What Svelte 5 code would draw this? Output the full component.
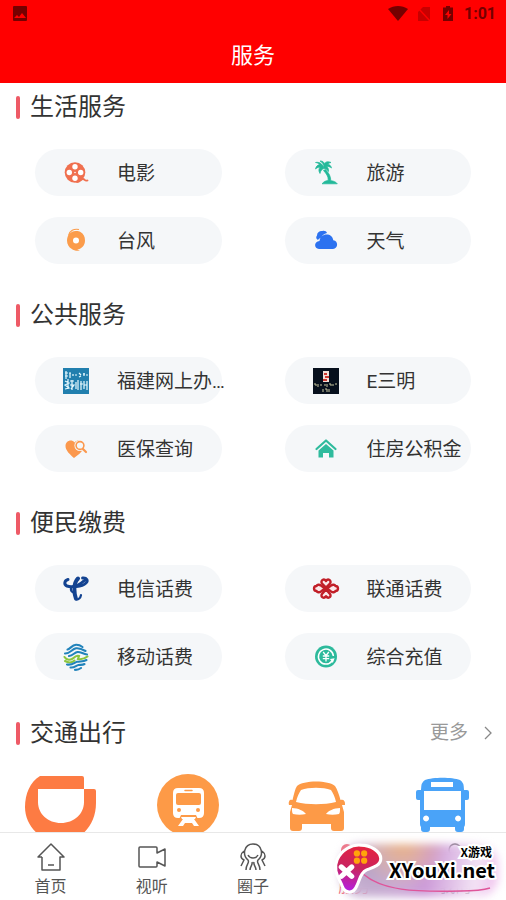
<script lang="ts">
  const sections = [
    {
      title: '生活服务',
      items: [
        { label: '电影', icon: 'film' },
        { label: '旅游', icon: 'palm' },
        { label: '台风', icon: 'typhoon' },
        { label: '天气', icon: 'cloud' }
      ]
    },
    {
      title: '公共服务',
      items: [
        { label: '福建网上办…', icon: 'fujian' },
        { label: 'E三明', icon: 'sanming' },
        { label: '医保查询', icon: 'health' },
        { label: '住房公积金', icon: 'house' }
      ]
    },
    {
      title: '便民缴费',
      items: [
        { label: '电信话费', icon: 'telecom' },
        { label: '联通话费', icon: 'unicom' },
        { label: '移动话费', icon: 'mobile' },
        { label: '综合充值', icon: 'recharge' }
      ]
    }
  ];

  const travel = ['ride', 'train', 'car', 'bus'];

  const tabs = [
    { label: '首页', icon: 'home' },
    { label: '视听', icon: 'video' },
    { label: '圈子', icon: 'circle' },
    { label: '服务', icon: 'service' },
    { label: '我的', icon: 'mine' }
  ];

  let activeTab = $state('服务');
</script>

{#snippet serviceIcon(name: string)}
  <svg class="icon" viewBox="0 0 28 28" aria-hidden="true">
    {#if name === 'film'}
      <circle cx="13" cy="13.500" r="10.300" fill="#f0704f" />
      <path d="M15 23c3 0 4-3 6-3 2 0 1.500 2.500 4.500 1.500" fill="none" stroke="#f0704f" stroke-width="1.800" stroke-linecap="round" />
      <g fill="#fff">
        <circle cx="13" cy="7.800" r="2.700" />
        <circle cx="13" cy="19.200" r="2.700" />
        <circle cx="7.300" cy="13.500" r="2.700" />
        <circle cx="18.700" cy="13.500" r="2.700" />
        <circle cx="13" cy="13.500" r="0.800" />
      </g>
    {:else if name === 'palm'}
      <g fill="#23b99a" stroke="#23b99a" stroke-width="0.700" stroke-linejoin="round">
        <path d="M10 24.800c2-2.300 4-3.200 6.200-3.300.3-4-2-7-4.700-10l2-1c3.500 3.500 5.300 7 5.300 11.200 3 .2 5 1.200 6.500 3.100z" />
        <path d="M12 8.500C10 4.500 7 2.600 3.500 3.500c2 .3 3.500 1 4 2C5.500 6 4 7.500 3.500 10c1.800-1.500 3.200-2 4.500-1.800C6.500 10 6.500 12 8 14.500c.5-2.500 1.500-4 4-5 1.500 0 3 1 4.500 3 .3-2.500-.5-4-2-5 2-.2 3.500.3 5 1.500-.5-2.300-2-3.500-4-3.700.8-1 2-1.500 3.500-1.800C15.500 1.800 13 3 12.500 5 12 3 10.500 1.800 8 2c2.500 1.500 4 3.500 4 6.500z" />
      </g>
    {:else if name === 'typhoon'}
      <path d="M14.500 4C9 3.500 5 8 5 13.500c0 4 2 6.800 4.500 8.200 2.500 2 5.500 2.300 8.500 1.800-1.500-.2-2.300-.6-2.700-1C20 22 23 18 23 13.500c0-4-1.500-6.500-4.500-8.500-1.300-.8-2.600-1-4-1z" fill="#fb9c4b" />
      <path d="M17 2.500c-5-1-9.500 1-10.500 6" fill="none" stroke="#fb9c4b" stroke-width="1.200" />
      <circle cx="14" cy="13.500" r="3" fill="#fff" />
    {:else if name === 'cloud'}
      <path d="M6 13c-2-1-2.300-3-1-4.500C5 5 8 3.500 10.500 4c2-.5 4 .5 4.500 2-3 .5-5 2.500-5.500 4.500C8 11 7 11.500 6 13z" fill="#2c72f0" />
      <path d="M7 22c-5-.3-5.500-7.500.5-8C8 10 11 7.500 14.500 7.500c3.500 0 6.300 2 6.800 5.800 5.300.7 5 8.200-.3 8.700z" fill="#2c72f0" />
    {:else if name === 'fujian'}
      <path d="M1 1h26v26H1z" fill="#217fae" />
      <path d="M3 6h3M4 4v8M3 9h3M8 6v5M7 6h2M11 7v2M13 8h2M17 6l2 2M17 10l2-1M21 7h2M22 6v3M24 8h2M3 14l4 2-4 2 4 3-4 1M6 12v10M8 14h4M10 13v10M8 18h4l-3 4M14 15v7M16 13v10M19 14v9M18 17h3M22 14v8M25 14v9M22 18h3" fill="none" stroke="#e8fbff" stroke-width="1.200" />
    {:else if name === 'sanming'}
      <path d="M1 1h26v26H1z" fill="#07101d" />
      <path d="M11 4h6v11h-6z" fill="#f1e0d8" />
      <path d="M12 6h3v2h-3zM13 9h4v2h-4zM11 12h4v2h-4z" fill="#cf3931" />
      <path d="M2 17h2v2M6 17v3M8 18h2M13 17v2M15 17v3M17 17h2v2M21 17v2M23 17h2M11 22v3M13 22h2v3M17 22v3" fill="none" stroke="#c8c6a0" stroke-width="1" />
    {:else if name === 'health'}
      <path d="M12 23C8 19.500 3.500 15.500 3.500 11c0-5 6-7.500 9-3.500 2-2.500 5-2.500 7-1l2 7c-2 4-5.500 6.500-9.500 9.500z" fill="#fb984d" />
      <circle cx="18" cy="10.500" r="5.600" fill="#f5f7f9" />
      <circle cx="18" cy="10.500" r="3.900" fill="#f5f7f9" stroke="#fb984d" stroke-width="1.600" />
      <path d="m21 14 3 3" stroke="#fb984d" stroke-width="2.200" stroke-linecap="round" />
    {:else if name === 'house'}
      <path d="m4.500 14 9.500-8.500 9.500 8.500" fill="none" stroke="#2fbb9d" stroke-width="2.200" stroke-linecap="round" stroke-linejoin="round" />
      <path d="M6.500 15.500 14 9l7.500 6.500v7H17V18h-6v4.500H6.500z" fill="#2fbb9d" />
    {:else if name === 'telecom'}
      <g fill="none" stroke="#134391" stroke-linecap="round">
        <path d="M6 4.500C2.500 5.500 1.500 9.500 5 11c5 1.800 12-.5 18-6" stroke-width="3" />
        <path d="M20.500 3c4.500-.5 6 2.500 3.500 5-2 2-5.500 3.200-9.500 3.500" stroke-width="2.800" />
        <path d="M16 3.500c-3 3-3.800 6.500-3.600 11 .1 4 .4 6.500 1.500 9" stroke-width="4" />
        <path d="M9 12.500c-.5 3 .5 4.500 3 5.500M14 24.500c2.500.5 4.500-1.500 5-4.500" stroke-width="2.200" />
      </g>
    {:else if name === 'unicom'}
      <g fill="#fbe9ea" stroke="#c11f28" stroke-width="2.400" stroke-linejoin="round">
        <path d="M14 12.500 10 8.500C8 5.500 12 3 14 6 16 3 20 5.500 18 8.500z" />
        <path d="m14 14.500-4 4.500c-2 3 2 5 4 2.300 2 2.700 6 .7 4-2.300z" />
        <path d="m13 13.500-4-3c-2-1.300-4-.8-4.500.5-3.300.2-3.300 4.800 0 5 .5 1.300 2.500 1.800 4.500.5z" />
        <path d="m15 13.500 4-3c2-1.300 4-.8 4.500.5 3.300.2 3.300 4.800 0 5-.5 1.300-2.500 1.800-4.500.5z" />
      </g>
    {:else if name === 'mobile'}
      <g fill="none" stroke-width="2.100" stroke-linecap="round">
        <path d="M5.500 6.500C8 6 10 2 14 1.800c2.500-.1 4.500.7 6.500 2.200" stroke="#2183bb" />
        <path d="M3 10.500c5 .3 7-4.500 11-5.200 3.500-.5 6 .7 9.500 2.700" stroke="#2183bb" />
        <path d="M7 13c4-.5 5.500-3.500 8.500-4 3-.4 5.500 2 9.500 2.500" stroke="#2183bb" />
        <path d="M2.500 14c2 3.500 6.500 3.500 9 1 1.500-1.500 3.500-3 5.500-2l-1 3c3 .5 7-.5 9.500-2.500" stroke="#8bc53f" />
        <path d="M3 18c3.500 2 7.500 1.500 9.500-.5" stroke="#8bc53f" />
        <path d="M5 21.500c5 1 7.500-2 10-2.700 3.500-.7 6 .2 9.500-1.800" stroke="#2183bb" />
        <path d="M8.500 24.500c4 .5 5.500-2 8-2.500 2-.3 4 .3 6-1M13 26.800c2 .2 4-.3 6-1.800" stroke="#2183bb" />
      </g>
    {:else if name === 'recharge'}
      <circle cx="14" cy="13.500" r="11" fill="#2dba9c" />
      <path d="M20 18a7.500 7.500 0 1 1 1.400-5" fill="none" stroke="#fff" stroke-width="1.500" />
      <path d="m18 16 4.600-.8-1.800 4.700z" fill="#fff" />
      <path d="m11.200 9 2.800 3.700L16.800 9M14 12.500v6M10.800 13h6.400M10.800 15.700h6.400" fill="none" stroke="#fff" stroke-width="1.300" />
    {/if}
  </svg>
{/snippet}

{#snippet travelIcon(name: string)}
  <svg class="travel-icon" viewBox="0 0 72 72" aria-hidden="true">
    {#if name === 'ride'}
      <path d="M15 3h42q2 0 2 2v11h10q2 0 2 2v12c0 24-17 39-36 39S0 53 0 34C0 21 5 9 15 3zm-2 13v13c0 12 10 21 23 21s23-9 23-21V16z" fill="#fd7b43" fill-rule="evenodd" />
    {:else if name === 'train'}
      <circle cx="36" cy="32" r="31" fill="#fd9a47" />
      <path d="M26 15h21q5 0 5 5v20q0 5-5 5H26q-5 0-5-5V20q0-5 5-5z" fill="#fff" />
      <rect x="24" y="20" width="25" height="12" rx="2" fill="#fd9a47" />
      <path d="M33 17.500h7" stroke="#fd9a47" stroke-width="1.500" stroke-linecap="round" />
      <circle cx="27" cy="37" r="2" fill="#fd9a47" />
      <circle cx="46" cy="37" r="2" fill="#fd9a47" />
      <path d="m29 42-5 11h25l-5-11z" fill="#fd9a47" />
      <path d="M29 44h15l-1 2h-1l5 7h-5l-2-3h-7l-2 3h-5l5-7h-1z" fill="#fff" />
    {:else if name === 'car'}
      <path d="M18 13c6-6 32-6 38 0 2 3 4 8 5.500 14 3-1 5 1 4.500 5h-3l2 7v16q0 3-3 3h-7q-3 0-3-3v-4H23v4q0 3-3 3h-6q-3 0-3-3V39l2-7h-3c-1-4 1-6 3.500-5C15 21 16 16 18 13zm4 4c-2 3-4 7-5 12 12 3 28 3 40 0-1-5-3-9-5-12-8-3-22-3-30 0zm-9 18c0 3 0 5 1 6 4 1 9 1 13 0-2-3-8-6-14-6zm48 0c-6 0-12 3-14 6 4 1 9 1 13 0 1-1 1-3 1-6z" fill="#fd9a47" fill-rule="evenodd" />
    {:else if name === 'bus'}
      <path d="M19 7c8-3 27-3 35 0q4 2 4 10h3q2 0 2 2v6q0 2-2 2h-2v24q0 2-1 3v2q0 3-3 3h-3q-3 0-3-3v-2H24v2q0 3-3 3h-3q-3 0-3-3v-2q-1-1-1-3V27h-2q-2 0-2-2v-6q0-2 2-2h3q0-8 4-10zm6 2v5h22V9zm-7 9v19h37V18zm2 24.500a3 3 0 1 0 .1 0zm32 0a3 3 0 1 0 .1 0z" fill="#4aa3f8" fill-rule="evenodd" />
    {/if}
  </svg>
{/snippet}

{#snippet tabIcon(name: string)}
  <svg class="tab-icon" viewBox="0 0 28 28" fill="none" stroke="#555" stroke-width="1.500" stroke-linejoin="round" aria-hidden="true">
    {#if name === 'home'}
      <path d="M5 14H1L14 1l13 13h-4v13H5V14M11 22h6" />
    {:else if name === 'video'}
      <path d="M2 4h16q1 0 1 1v5l8-4v17l-8-4v4q0 1-1 1H2q-1 0-1-1V5q0-1 1-1z" />
    {:else if name === 'circle'}
      <path d="M9 17C3 12 5 1 14 1s11 11 5 16M5 8c-4 3-4 7 0 9l-3 6M9 17c2 3-2 4-2 10M13 19c1 3-2 4-2 8M23 8c4 3 4 7 0 9l3 6M19 17c-2 3 2 4 2 10M15 19c-1 3 2 4 2 8M9 12c2 4 8 4 10 0" />
    {:else if name === 'service'}
      <g fill="#f36b7c" stroke="none">
        <circle cx="7" cy="7" r="6" />
        <circle cx="21" cy="7" r="6" />
        <circle cx="7" cy="21" r="6" />
        <circle cx="21" cy="21" r="6" />
      </g>
    {:else}
      <circle cx="14" cy="7" r="6" />
      <path d="M3 27c0-14 22-14 22 0z" />
    {/if}
  </svg>
{/snippet}

<div class="app">
  <header>
    <div class="status">
      <svg class="status-icon" viewBox="0 0 16 16" aria-hidden="true">
        <path d="M2 0h12q1 0 1 1v13q0 1-1 1H2q-1 0-1-1V1q0-1 1-1zm0 12h12l-4-5-3 4-2-2z" fill="#750000" fill-rule="evenodd" />
      </svg>
      <div class="status-right">
        <svg class="wifi" viewBox="0 0 20 16" aria-hidden="true">
          <path d="M0 3C6-1 14-1 20 3L10 15z" fill="#750000" />
        </svg>
        <svg class="status-icon" viewBox="0 0 16 16" aria-hidden="true">
          <path d="M7 1h7v14H2V6z" fill="#c80000" />
          <path d="m2 2 12 13" stroke="#f00" stroke-width="1.500" />
        </svg>
        <svg class="status-icon" viewBox="0 0 16 16" aria-hidden="true">
          <path d="M6 0h4v1.500h3V15H3V1.500h3zm3 4-4 5h2.500v4l4-5H9z" fill="#750000" fill-rule="evenodd" />
        </svg>
        <span class="time">1:01</span>
      </div>
    </div>
    <h1>服务</h1>
  </header>

  <main>
    {#each sections as section}
      <section>
        <div class="section-head"><h2>{section.title}</h2></div>
        <div class="grid">
          {#each section.items as item}
            <a class="pill" href="#{item.icon}">
              {@render serviceIcon(item.icon)}
              <span>{item.label}</span>
            </a>
          {/each}
        </div>
      </section>
    {/each}

    <section class="travel-section">
      <div class="section-head">
        <h2>交通出行</h2>
        <a class="more" href="#more">
          更多
          <svg viewBox="0 0 8 16" aria-hidden="true"><path d="m1 2 6 6-6 6" fill="none" stroke="#888" stroke-width="1.300" /></svg>
        </a>
      </div>
      <div class="travel">
        {#each travel as name}
          <a href="#{name}" aria-label={name}>{@render travelIcon(name)}</a>
        {/each}
      </div>
    </section>
  </main>

  <nav>
    {#each tabs as tab}
      <button class:active={activeTab === tab.label} onclick={() => (activeTab = tab.label)}>
        {@render tabIcon(tab.icon)}
        <span>{tab.label}</span>
      </button>
    {/each}

    <div class="badge">
      <div class="haze"></div>
      <svg class="cable" viewBox="0 0 130 24" aria-hidden="true">
        <path d="M0 2c20 18 52 19 98 18 12 0 24-1 30-3" fill="none" stroke="#df559a" stroke-width="1.500" />
      </svg>
      <svg class="gamepad" viewBox="0 0 52 52" aria-hidden="true">
        <defs>
          <linearGradient id="pad" x1="0.600" y1="0" x2="0.400" y2="1">
            <stop offset="0" stop-color="#e5243f" />
            <stop offset="0.500" stop-color="#c9245f" />
            <stop offset="1" stop-color="#b51fe0" />
          </linearGradient>
        </defs>
        <path d="M4 18C8 9 18 3 27 4c9 0 19 6 19 13 0 7-9 9-14 11-6 3-6 9-9 15-3 8-11 8-14 1C7 37-1 29 4 18z" fill="url(#pad)" stroke="#fff" stroke-width="3" />
        <g fill="#ffa50a">
          <circle cx="23" cy="12" r="3" />
          <circle cx="30" cy="12" r="3" />
          <circle cx="23" cy="19" r="3" />
          <circle cx="30" cy="19" r="3" />
        </g>
        <path d="m8 25 10 9M18 25l-10 9" stroke="#fff" stroke-width="5" stroke-linecap="round" />
      </svg>
      <div class="brand">
        <small>X游戏</small>
        <strong>XYouXi.net</strong>
      </div>
    </div>
  </nav>
</div>

<style>
  :global(body) { margin: 0; background: #fff; }
  .app {
    display: flex;
    flex-direction: column;
    height: 100vh;
    overflow: hidden;
    color: #333;
    font-family: Roboto, "Noto Sans CJK SC", sans-serif;
  }
  a { color: inherit; text-decoration: none; }
  svg { display: block; flex-shrink: 0; }

  header { background: #f00; flex-shrink: 0; }
  .status { display: flex; justify-content: space-between; align-items: center; height: 28px; padding: 0 10px 0 12px; }
  .status-right { display: flex; align-items: center; gap: 8px; }
  .status-icon { width: 16px; height: 16px; }
  .wifi { width: 20px; height: 16px; }
  .time { font-size: 16px; line-height: 20px; font-weight: 700; color: #750000; }
  h1 { margin: 0; font-size: 22px; line-height: 55px; font-weight: 400; text-align: center; color: #fff; }

  main { flex: 1; min-height: 0; overflow-y: auto; scrollbar-width: none; }
  section { padding-bottom: 27px; }
  .section-head { display: flex; justify-content: space-between; align-items: center; height: 48px; padding: 0 14px 0 16px; }
  h2 { display: flex; align-items: center; gap: 10px; margin: 0; font-size: 24px; line-height: 32px; font-weight: 400; }
  h2::before { content: ""; width: 4px; height: 23px; border-radius: 2px; background: #ee5a66; }
  .more { display: flex; align-items: center; gap: 16px; font-size: 19px; line-height: 28px; color: #999; }
  .more svg { width: 8px; height: 16px; }

  .grid { display: grid; grid-template-columns: 1fr 1fr; gap: 21px 63px; padding: 18px 35px 0; }
  .pill { display: flex; align-items: center; gap: 27px; height: 47px; min-width: 0; box-sizing: border-box; padding-left: 27px; border-radius: 24px; background: #f5f7f9; font-size: 19px; line-height: 28px; white-space: nowrap; }
  .pill span { padding-top: 2px; }
  .icon { width: 28px; height: 28px; }

  .travel-section { padding: 2px 0 0; }
  .travel { display: flex; justify-content: space-between; padding: 16px 28px 0 25px; }
  .travel-icon { width: 72px; height: 72px; }

  nav { position: relative; flex-shrink: 0; display: flex; border-top: 1px solid #e8e8e8; background: #fff; }
  nav button { flex: 1; display: flex; flex-direction: column; align-items: center; gap: 6px; padding: 10px 0 3px; border: 0; background: none; color: #555; font: inherit; font-size: 16px; line-height: 20px; cursor: pointer; }
  nav button.active { color: #f36b7c; }
  .tab-icon { width: 28px; height: 28px; }

  .badge { position: absolute; right: 0; bottom: 0; width: 174px; height: 60px; pointer-events: none; }
  .haze {
    position: absolute;
    inset: 4px 8px 3px 8px;
    border-radius: 20px;
    background:
      radial-gradient(circle at 40% 0, #e9b285, transparent 40%),
      radial-gradient(circle at 18% 50%, #b9a3c6, transparent 45%),
      linear-gradient(100deg, #f0e2f2, #cc9ad8 55%, #f3e4f5 85%, #f0b9ec);
    filter: blur(4px);
  }
  .gamepad { position: absolute; left: 1px; top: 1px; width: 54px; height: 54px; }
  .cable { position: absolute; left: 30px; top: 31px; width: 130px; height: 24px; }
  .brand {
    position: absolute;
    right: 11px;
    top: 6px;
    display: flex;
    flex-direction: column;
    align-items: flex-end;
    color: #000;
    font-family: "Noto Sans CJK SC", sans-serif;
    paint-order: stroke fill;
    -webkit-text-stroke: 4px #fff;
  }
  .brand small { position: relative; z-index: 1; padding-right: 3px; font-size: 12px; line-height: 12px; font-weight: 700; }
  .brand strong { font-size: 20px; line-height: 24px; font-weight: 700; }
</style>
